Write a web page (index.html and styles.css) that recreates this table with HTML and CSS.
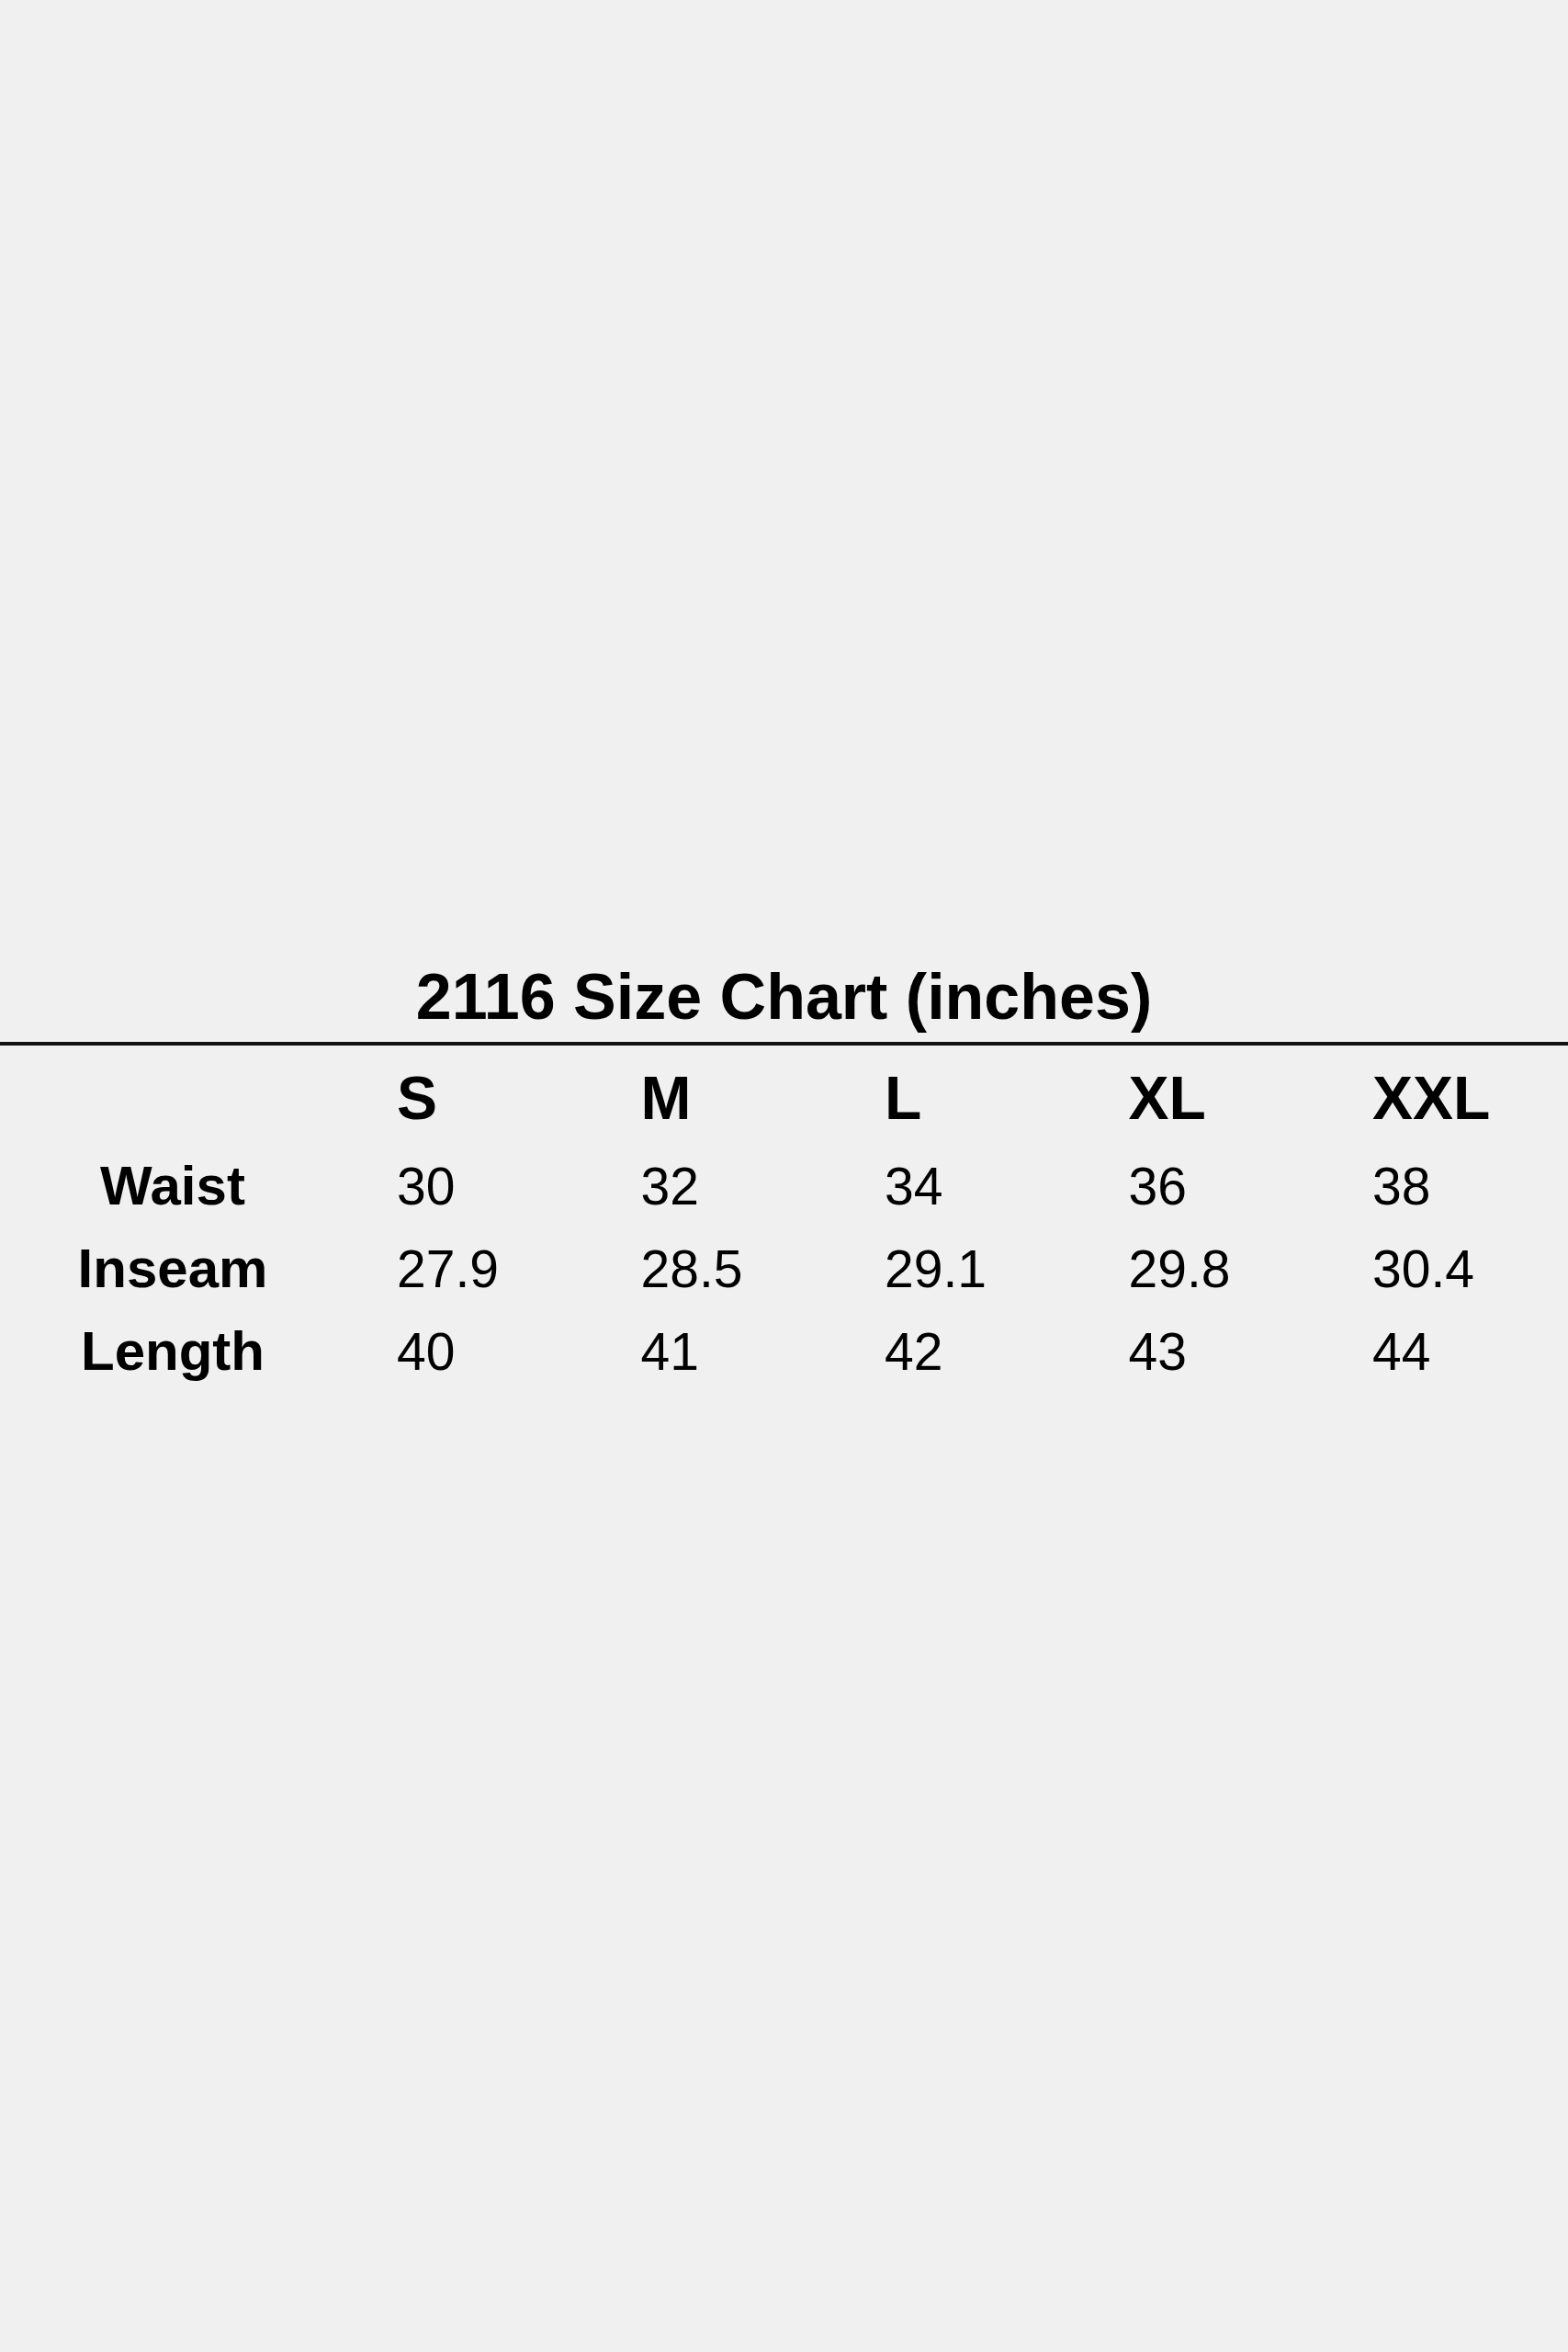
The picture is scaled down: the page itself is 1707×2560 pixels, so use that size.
FILE: index.html
```html
<!DOCTYPE html>
<html lang="en">
<head>
<meta charset="utf-8">
<title>2116 Size Chart</title>
<link rel="stylesheet" href="styles.css">
</head>
<body>
<main class="page">
  <section class="chart">
    <h1 class="chart-title">2116 Size Chart (inches)</h1>
    <hr class="chart-rule">
    <div class="chart-grid">
      <div class="row head">
        <span class="label"></span>
        <span class="cell">S</span>
        <span class="cell">M</span>
        <span class="cell">L</span>
        <span class="cell">XL</span>
        <span class="cell">XXL</span>
      </div>
      <div class="row data first">
        <span class="label">Waist</span>
        <span class="cell">30</span>
        <span class="cell">32</span>
        <span class="cell">34</span>
        <span class="cell">36</span>
        <span class="cell">38</span>
      </div>
      <div class="row data">
        <span class="label">Inseam</span>
        <span class="cell">27.9</span>
        <span class="cell">28.5</span>
        <span class="cell">29.1</span>
        <span class="cell">29.8</span>
        <span class="cell">30.4</span>
      </div>
      <div class="row data">
        <span class="label">Length</span>
        <span class="cell">40</span>
        <span class="cell">41</span>
        <span class="cell">42</span>
        <span class="cell">43</span>
        <span class="cell">44</span>
      </div>
    </div>
  </section>
</main>
</body>
</html>
```
FILE: styles.css
```css
html, body {
  margin: 0;
  padding: 0;
  background: #f0f0f0;
}

body {
  min-height: 2560px;
  font-family: "Liberation Sans", Arial, sans-serif;
  color: #000;
}

.page {
  padding-top: 1050px;
}

.chart {
  display: flex;
  flex-direction: column;
}

.chart-title {
  margin: 0;
  font-size: 70px;
  line-height: 70px;
  font-weight: 700;
  text-align: center;
}

.chart-rule {
  margin: 14px 0 0 0;
  border: 0;
  height: 4px;
  background: #111;
}

.chart-grid {
  display: flex;
  flex-direction: column;
  margin-top: 24px;
}

.row {
  display: grid;
  grid-template-columns: 432px repeat(4, 265.5px) 1fr;
  align-items: baseline;
}

.row .label {
  text-align: center;
  padding-right: 56px;
  font-weight: 700;
}

.row.head {
  font-size: 66px;
  line-height: 66px;
  font-weight: 700;
}

.row.data {
  font-size: 57px;
  line-height: 90px;
}

.row.data .label {
  font-size: 60px;
}

.row.data.first {
  margin-top: 18px;
}
```
